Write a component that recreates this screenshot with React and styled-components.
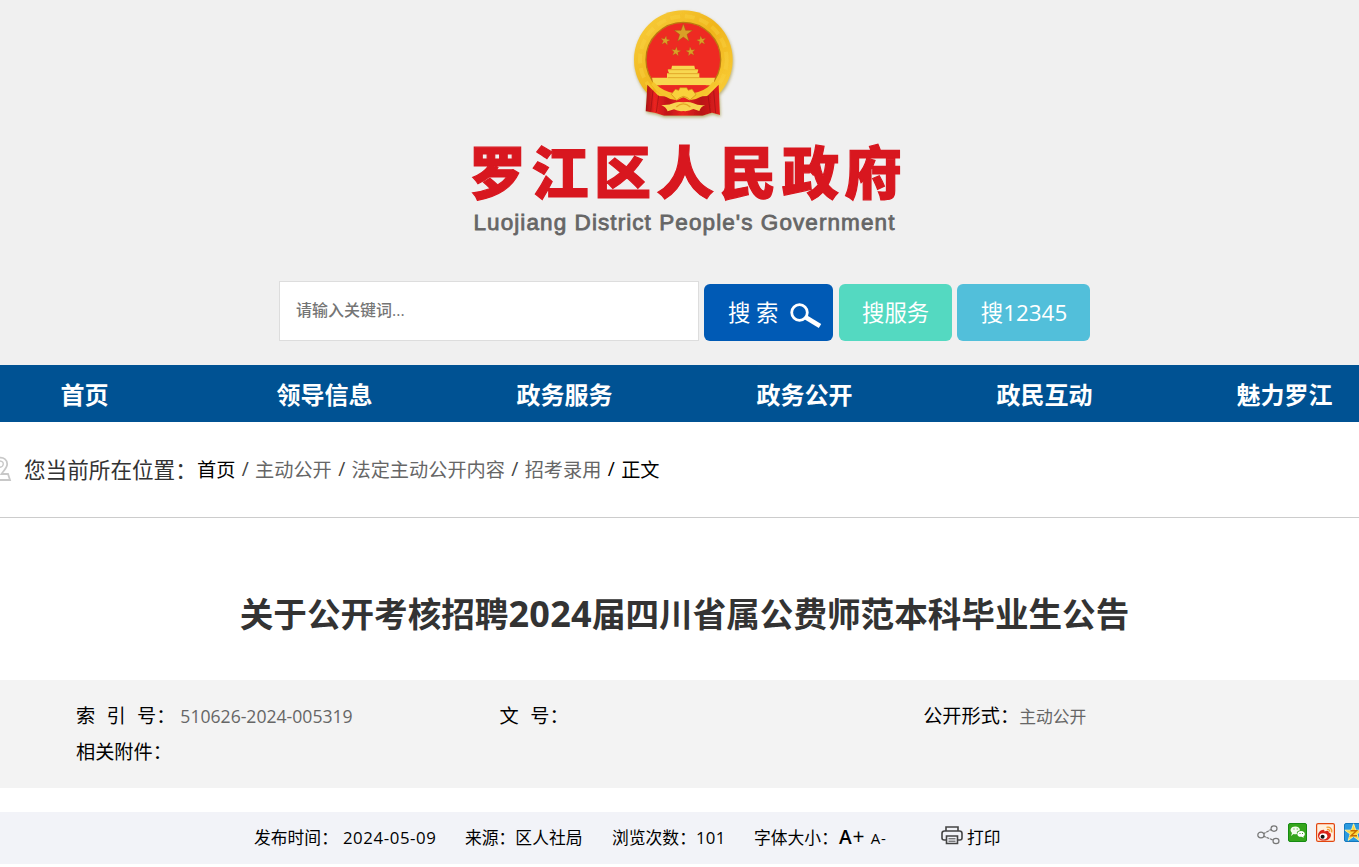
import React from 'react';
import styled, { createGlobalStyle } from 'styled-components';

const GlobalStyle = createGlobalStyle`
    * { box-sizing: border-box; }
    body {
        margin: 0;
        background: #fff;
        color: #000;
        overflow: hidden;
        font-family: "Open Sans", "Noto Sans CJK SC", sans-serif;
    }
    a { color: inherit; text-decoration: none; }
`;

const STAR = '0,-10 2.4,-3.1 9.5,-3.1 3.8,1.2 5.9,8.1 0,3.9 -5.9,8.1 -3.8,1.2 -9.5,-3.1 -2.4,-3.1';

const Emblem = () => (
    <EmblemSvg viewBox="0 0 390 390">
        <defs>
            <linearGradient id="gold" x1="0" y1="0" x2="1" y2="1">
                <stop offset="0" stopColor="#f8cf3e" />
                <stop offset="0.5" stopColor="#f0b51c" />
                <stop offset="1" stopColor="#fbd23c" />
            </linearGradient>
            <linearGradient id="drape" x1="0" y1="0" x2="1" y2="0">
                <stop offset="0" stopColor="#a90f12" />
                <stop offset="0.12" stopColor="#ea2420" />
                <stop offset="0.3" stopColor="#c01518" />
                <stop offset="0.5" stopColor="#ea2420" />
                <stop offset="0.75" stopColor="#b81316" />
                <stop offset="1" stopColor="#e3201d" />
            </linearGradient>
            <filter id="glow" x="-10%" y="-10%" width="120%" height="120%">
                <feDropShadow dx="2" dy="5" stdDeviation="5" floodColor="#a99d55" floodOpacity="0.8" />
            </filter>
        </defs>
        <g filter="url(#glow)">
            <circle cx="190" cy="179" r="148" fill="url(#gold)" />
            <circle cx="190" cy="179" r="130" fill="none" stroke="#f9d544" strokeWidth="12" strokeDasharray="30 14" opacity="0.4" />
            <path d="M82 254 L116 288 L186 292 L262 288 L296 254 L300 345 L276 338 L248 347 L132 347 L106 339 L77 334 Z" fill="url(#drape)" />
        </g>
        <circle cx="190" cy="179" r="112" fill="#ee2a22" stroke="#bd7a10" strokeWidth="4" />
        <g fill="#d9a127" stroke="#a45b13" strokeWidth="0.5">
            <polygon points={STAR} transform="translate(190 100) scale(2.9)" />
            <polygon points={STAR} transform="translate(136 122) rotate(10) scale(1.5)" />
            <polygon points={STAR} transform="translate(244 122) rotate(-10) scale(1.5)" />
            <polygon points={STAR} transform="translate(168 155) rotate(8) scale(1.5)" />
            <polygon points={STAR} transform="translate(212 155) rotate(-8) scale(1.5)" />
        </g>
        <path d="M156 197 H223 L225 207 L235 209 L232 220 H238 V233 H285 L279 256 H101 L96 233 H141 V220 H147 L143 209 L154 207 Z" fill="#f8d750" />
        <path d="M144 209 H234 M143 221 H237 M143 233 H237" stroke="#e3a82a" strokeWidth="3" />
        <path d="M100 245 L118 262 Q150 284 190 282 Q232 284 264 262 L279 245 L286 253 Q250 298 208 301 L190 291 L171 301 Q123 294 94 254 Z" fill="#f5c52d" />
        <path d="M121 256 H259 Q232 278 216 278 L205 271 L200 263 H180 L176 271 L160 278 Q142 274 121 256 Z" fill="#ea2822" />
        <path d="M154 283 L166 268 L176 271 L180 263 L200 263 L205 271 L216 267 L228 284 L210 300 L202 293 L190 289 L178 294 L170 301 Z" fill="#f9d13b" stroke="#cf8218" strokeWidth="2" />
        <path d="M124 315 Q146 317 164 308 Q172 305 190 307 Q208 305 218 309 Q238 318 256 315 Q242 320 238 333 L220 327 Q205 335 190 333 Q174 335 162 328 L143 334 Q138 321 124 315 Z" fill="#f8d450" />
        <path d="M169 321 Q190 302 211 321" fill="none" stroke="#e5a527" strokeWidth="4" />
        <path d="M99 272 L92 334 M116 286 L109 336 M264 286 L271 338 M281 273 L287 340" stroke="#8e0f12" strokeWidth="3" opacity="0.55" />
    </EmblemSvg>
);

const NAV = ['首页', '领导信息', '政务服务', '政务公开', '政民互动', '魅力罗江'];
const CRUMBS = ['主动公开', '法定主动公开内容', '招考录用'];

export default function App() {
    return (
        <Page>
            <GlobalStyle />
            <Header>
                <Emblem />
                <SiteName>罗江区人民政府</SiteName>
                <SiteNameEn>Luojiang District People's Government</SiteNameEn>
                <SearchBar>
                    <SearchInput placeholder="请输入关键词..." />
                    <SearchButton $width="129px" $bg="#005ab5" $indent="12px">
                        <span>搜 索</span>
                        <svg width="32" height="26" viewBox="0 0 32 26" fill="none" stroke="#fff">
                            <circle cx="9.5" cy="9.5" r="7.8" strokeWidth="2.8" />
                            <path d="M16 14.5 L30 23" strokeWidth="4.6" />
                        </svg>
                    </SearchButton>
                    <SearchButton $width="113px" $bg="#54d9c1">搜服务</SearchButton>
                    <SearchButton $width="133px" $bg="#52bfda">搜12345</SearchButton>
                </SearchBar>
            </Header>
            <Nav>
                {NAV.map(item => <a href="#" key={item}>{item}</a>)}
            </Nav>
            <Breadcrumb>
                <svg width="12" height="26" viewBox="0 0 12 26" fill="none" stroke="#c8c8c8" strokeWidth="1.8">
                    <path d="M-1 1.8 C4 1 7.2 4 7.2 8 C7.2 12 3.5 14.5 1.5 18 H8 L10 24 H-1" />
                    <path d="M-1 5 C2.5 5 3.5 6.5 3.2 8.5 C3 10 1.5 11.3 -1 11.3" strokeWidth="1.4" />
                </svg>
                <CrumbLabel>您当前所在位置：</CrumbLabel>
                <a href="#">首页</a>
                {CRUMBS.map(item => (
                    <React.Fragment key={item}>
                        <Slash>/</Slash>
                        <CrumbLink href="#">{item}</CrumbLink>
                    </React.Fragment>
                ))}
                <Slash $dark>/</Slash>
                <span>正文</span>
            </Breadcrumb>
            <Title>关于公开考核招聘<em>2024</em>届四川省属公费师范本科毕业生公告</Title>
            <InfoBox>
                <InfoItem>
                    <Spaced $gap="11.3px"><i>索</i><i>引</i><i>号：</i></Spaced>
                    <InfoValue $numeric>510626-2024-005319</InfoValue>
                </InfoItem>
                <InfoItem>
                    <Spaced $gap="11.5px"><i>文</i><i>号：</i></Spaced>
                </InfoItem>
                <InfoItem>
                    <span>公开形式：</span>
                    <InfoValue>主动公开</InfoValue>
                </InfoItem>
                <InfoItem><span>相关附件：</span></InfoItem>
            </InfoBox>
            <MetaBar>
                <MetaItem $width="211px">发布时间：<Num $left="5px" $spacing="0.6px">2024-05-09</Num></MetaItem>
                <MetaItem $width="147px">来源：区人社局</MetaItem>
                <MetaItem $width="142px">浏览次数：<Num $spacing="0.3px">101</Num></MetaItem>
                <MetaItem $width="187px">
                    字体大小：
                    <FontLarger>A<b>+</b></FontLarger>
                    <FontSmaller>A-</FontSmaller>
                </MetaItem>
                <Print>
                    <svg width="22" height="19" viewBox="0 0 22 19" fill="none" stroke="#444" strokeWidth="1.6">
                        <path d="M5 5 V1 H17 V5" />
                        <path d="M5 14 H3.2 Q1 14 1 12 V7.5 Q1 5 3.5 5 H18.5 Q21 5 21 7.5 V12 Q21 14 18.8 14 H17" />
                        <path d="M5.5 10 H16.5 V17.5 H5.5 Z" />
                        <path d="M7.5 12.8 H14.5 M7.5 15.2 H14.5" strokeWidth="1" />
                    </svg>
                    打印
                </Print>
                <Share>
                    <svg width="23" height="20" viewBox="0 0 23 20" fill="none" stroke="#777" strokeWidth="1.2">
                        <path d="M6 9 L14 4.5 M6 11 L16 15" strokeDasharray="3 0.7" />
                        <ellipse cx="4" cy="10" rx="3.2" ry="2.8" />
                        <ellipse cx="17" cy="3.6" rx="3" ry="2.7" />
                        <ellipse cx="19" cy="16" rx="3" ry="2.7" />
                    </svg>
                    <ShareIcon viewBox="0 0 19 19">
                        <rect x="0.5" y="0.5" width="18" height="18" rx="1.5" fill="#35a51c" stroke="#168b12" />
                        <path d="M3 13 L4 10 C1 7 3 3.5 7.2 3.5 C10 3.5 12 5 12 7.3 C9 8 8.5 9.5 9 11 C7.5 11.4 6.5 11.2 5.5 11 Z" fill="#f3fbed" />
                        <path d="M15.8 14.8 L13.5 13.8 C11 14.2 9.2 12.8 9.3 11 C9.5 9 11 8 13 8 C15.5 8 17 9.6 16.8 11.3 C16.8 12.3 16.2 12.9 15.4 13.4 Z" fill="#fff" />
                        <path d="M5.5 6 h1 M8.7 6 h1 M11.5 10.5 h1 M14 10.5 h1" stroke="#35a51c" />
                    </ShareIcon>
                    <ShareIcon viewBox="0 0 19 19">
                        <rect x="0.6" y="0.6" width="17.8" height="17.8" rx="1.5" fill="#fff0de" stroke="#e2460f" strokeWidth="1.2" />
                        <path d="M2 12.5 C2 9.5 5 6.5 7.5 6.8 C8.5 7 8.5 8 8.5 8.5 C11 7 13 7.5 12.8 9.6 C15 10 15.5 12 14.5 14 C13 17 10 17.5 7.5 17.5 C4 17.5 2 15.5 2 12.5 Z" fill="#da2419" />
                        <ellipse cx="7.3" cy="13.3" rx="4" ry="3.1" fill="#fff" />
                        <circle cx="6.6" cy="13.7" r="2" fill="#111" />
                        <path d="M10.5 4.3 C14 3.4 16.4 6 15.7 9.5 M11 6.6 C13 6.1 14 7.2 13.6 8.7" fill="none" stroke="#f29a2b" strokeWidth="1.3" />
                    </ShareIcon>
                    <ShareIcon viewBox="0 0 19 19">
                        <rect x="0.5" y="0.5" width="18" height="18" rx="1.5" fill="#2a9ae0" stroke="#1478bd" />
                        <polygon points={STAR} transform="translate(9.6 10) scale(0.92)" fill="#ffd83b" stroke="#fff09a" strokeWidth="1" />
                        <path d="M6.5 7.8 H12.5 L7 12.8 H13" fill="none" stroke="#c46a00" strokeWidth="1.4" />
                    </ShareIcon>
                </Share>
            </MetaBar>
        </Page>
    );
}

const Page = styled.div`
    width: 1359px;
    height: 867px;
    overflow: hidden;
`;

const Header = styled.header`
    display: flex;
    flex-direction: column;
    align-items: center;
    height: 365px;
    padding-left: 10px;
    background: #f0f0f0;
`;

const EmblemSvg = styled.svg`
    flex: none;
    width: 130px;
    height: 130px;
`;

const SiteName = styled.h1`
    margin: 0;
    padding-left: 7px;
    height: 82px;
    color: #d8171f;
    font: 900 57px/79px "Noto Sans CJK SC", sans-serif;
    letter-spacing: 5.6px;
    white-space: nowrap;
    -webkit-text-stroke: 1.2px #d8171f;
`;

const SiteNameEn = styled.div`
    height: 69px;
    color: #666;
    font: 400 22.5px/22px "Liberation Sans", Arial, sans-serif;
    letter-spacing: 1.08px;
    white-space: nowrap;
    -webkit-text-stroke: 0.8px #666;
`;

const SearchBar = styled.div`
    display: flex;
    align-items: flex-end;
    width: 811px;
    height: 60px;
    gap: 5.4px;
`;

const SearchInput = styled.input`
    width: 420px;
    height: 60px;
    padding: 0 16px 2px;
    border: 1px solid #ddd;
    background: #fff;
    font-family: inherit;
    font-size: 16px;
    font-weight: 500;
    &::placeholder { color: #757575; }
`;

const SearchButton = styled.button`
    display: flex;
    align-items: center;
    justify-content: center;
    gap: 11px;
    flex: none;
    width: ${props => props.$width};
    height: 57px;
    padding: 0 0 2px ${props => props.$indent || '1px'};
    border: none;
    border-radius: 6px;
    background: ${props => props.$bg};
    color: #fff;
    font-family: inherit;
    font-size: 22.4px;
    white-space: nowrap;
    svg { margin-top: 8px; }
`;

const Nav = styled.nav`
    display: flex;
    width: 1440px;
    height: 57px;
    margin-left: -35.5px;
    background: #005293;
    a {
        width: 240px;
        color: #fff;
        font-size: 24px;
        font-weight: 700;
        line-height: 60px;
        text-align: center;
    }
`;

const Breadcrumb = styled.div`
    display: flex;
    align-items: center;
    height: 96px;
    padding-bottom: 2px;
    border-bottom: 1px solid #ccc;
    font-size: 19.2px;
    white-space: nowrap;
`;

const CrumbLabel = styled.span`
    width: 173px;
    margin-left: 12px;
    color: #333;
    font-size: 21.6px;
`;

const CrumbLink = styled.a`
    color: #666 !important;
`;

const Slash = styled.span`
    width: 19.7px;
    color: ${props => props.$dark ? '#000' : '#444'};
    text-align: center;
`;

const Title = styled.h2`
    height: 162px;
    margin: 0;
    padding-left: 10px;
    color: #333;
    font-size: 33.6px;
    font-weight: 700;
    line-height: 192px;
    text-align: center;
    white-space: nowrap;
    em {
        font-style: normal;
        font-size: 36px;
        letter-spacing: 0.3px;
        line-height: 1;
    }
`;

const InfoBox = styled.div`
    display: grid;
    grid-template-columns: repeat(3, 423.6px);
    grid-auto-rows: 36px;
    height: 108px;
    padding: 17px 0 0 76px;
    background: #f3f3f3;
`;

const InfoItem = styled.div`
    display: flex;
    align-items: center;
    font-size: 19.2px;
    white-space: nowrap;
`;

const Spaced = styled.span`
    display: flex;
    gap: ${props => props.$gap};
    i { font-style: normal; }
`;

const InfoValue = styled.span`
    margin-left: ${props => props.$numeric ? '5px' : '0'};
    padding-top: 2px;
    color: #666;
    font-size: ${props => props.$numeric ? '17.6px' : '16.8px'};
`;

const MetaBar = styled.div`
    display: flex;
    align-items: center;
    height: 52px;
    margin-top: 24px;
    padding: 0 0 2px 254px;
    background: #f2f3f8;
    font-size: 16.8px;
    white-space: nowrap;
`;

const MetaItem = styled.div`
    display: flex;
    align-items: baseline;
    flex: none;
    width: ${props => props.$width};
`;

const Num = styled.span`
    margin-left: ${props => props.$left || '0'};
    letter-spacing: ${props => props.$spacing};
`;

const FontLarger = styled.a`
    margin-left: 1px;
    font-size: 19.2px;
    font-weight: 600;
    line-height: 1;
    b {
        margin-left: 1px;
        font-size: 21px;
        font-weight: 400;
        line-height: 1;
    }
`;

const FontSmaller = styled.a`
    margin-left: 6px;
    font-size: 15px;
    letter-spacing: 1px;
`;

const Print = styled.a`
    display: flex;
    align-items: center;
    gap: 4px;
    width: 316px;
    flex: none;
    svg { margin-top: -4px; }
`;

const Share = styled.div`
    display: flex;
    align-items: center;
    flex: none;
    margin-top: -7px;
    > svg:first-child { margin: 2px 8px 0 0; }
`;

const ShareIcon = styled.svg`
    width: 19px;
    height: 19px;
    margin-right: 9px;
    margin-top: -2px;
`;
